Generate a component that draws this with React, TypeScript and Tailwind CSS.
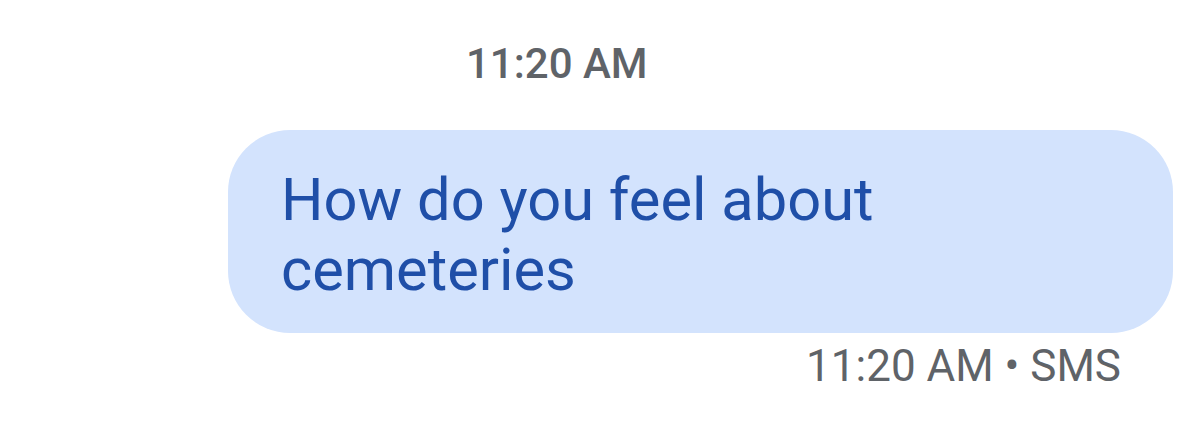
export default function App() {
  return (
    <div className="w-[1200px] h-[421px] bg-white overflow-hidden" style={{ fontFamily: 'Roboto, "Noto Sans", sans-serif' }}>
      <div className="pt-[39px] h-[130px]">
        <div className="ml-[466px] text-[42px] leading-[50px] font-medium text-[#5f6368]">11:20 AM</div>
      </div>
      <div className="ml-[228px] w-[945px] h-[203px] rounded-[62px] bg-[#d3e3fd] pl-[53px] pt-[35px]">
        <div className="text-[59.6px] leading-[70px] text-[#1f4fa8] w-[640px]">How do you feel about cemeteries</div>
      </div>
      <div className="w-[1121px] flex justify-end pt-[7px]">
        <div className="text-[44px] leading-[52px] text-[#5f6368]">11:20 AM • SMS</div>
      </div>
    </div>
  );
}
